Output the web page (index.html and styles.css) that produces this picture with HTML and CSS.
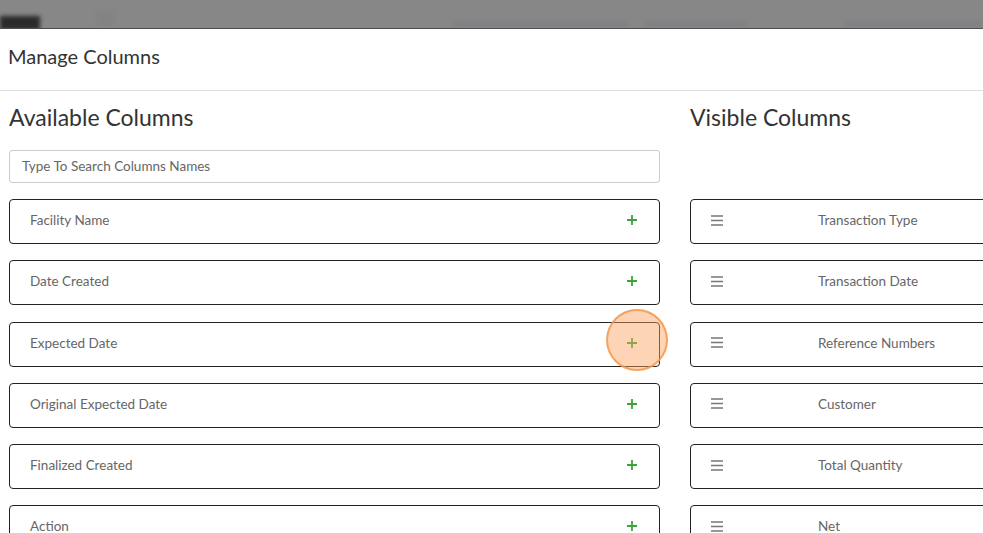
FILE: index.html
```html
<!DOCTYPE html>
<html lang="en">
<head>
    <meta charset="UTF-8">
    <meta name="viewport" content="width=device-width, initial-scale=1.0">
    <title>Manage Columns</title>
    <link rel="stylesheet" href="styles.css">
</head>
<body>

    <!-- dimmed page behind the modal -->
    <div class="backdrop">
        <span class="blur blur-logo"></span>
        <span class="blur blur-menu"></span>
        <span class="blur blur-link" style="width: 190px; margin-left: 340px;"></span>
        <span class="blur blur-link" style="width: 110px; margin-left: 18px;"></span>
        <span class="blur blur-link" style="width: 150px; margin-left: 100px;"></span>
    </div>

    <div class="modal">
        <div class="modal-header">
            <h4>Manage Columns</h4>
        </div>

        <div class="modal-body">
            <!-- Available -->
            <div class="col">
                <h2>Available Columns</h2>
                <input type="text" class="search" placeholder="Type To Search Columns Names">

                <div class="item">
                    <span>Facility Name</span>
                    <svg class="plus" width="12" height="12" viewBox="0 0 12 12"><path d="M6 1v10M1 6h10"/></svg>
                </div>
                <div class="item">
                    <span>Date Created</span>
                    <svg class="plus" width="12" height="12" viewBox="0 0 12 12"><path d="M6 1v10M1 6h10"/></svg>
                </div>
                <div class="item">
                    <span>Expected Date</span>
                    <svg class="plus" width="12" height="12" viewBox="0 0 12 12"><path d="M6 1v10M1 6h10"/></svg>
                    <span class="click-mark"></span>
                </div>
                <div class="item">
                    <span>Original Expected Date</span>
                    <svg class="plus" width="12" height="12" viewBox="0 0 12 12"><path d="M6 1v10M1 6h10"/></svg>
                </div>
                <div class="item">
                    <span>Finalized Created</span>
                    <svg class="plus" width="12" height="12" viewBox="0 0 12 12"><path d="M6 1v10M1 6h10"/></svg>
                </div>
                <div class="item">
                    <span>Action</span>
                    <svg class="plus" width="12" height="12" viewBox="0 0 12 12"><path d="M6 1v10M1 6h10"/></svg>
                </div>
            </div>

            <!-- Visible -->
            <div class="col">
                <h2>Visible Columns</h2>
                <div class="search-spacer"></div>

                <div class="item visible">
                    <svg class="handle" width="12" height="11" viewBox="0 0 12 11"><path d="M0 1h12M0 5.5h12M0 10h12"/></svg>
                    <span class="name">Transaction Type</span>
                </div>
                <div class="item visible">
                    <svg class="handle" width="12" height="11" viewBox="0 0 12 11"><path d="M0 1h12M0 5.5h12M0 10h12"/></svg>
                    <span class="name">Transaction Date</span>
                </div>
                <div class="item visible">
                    <svg class="handle" width="12" height="11" viewBox="0 0 12 11"><path d="M0 1h12M0 5.5h12M0 10h12"/></svg>
                    <span class="name">Reference Numbers</span>
                </div>
                <div class="item visible">
                    <svg class="handle" width="12" height="11" viewBox="0 0 12 11"><path d="M0 1h12M0 5.5h12M0 10h12"/></svg>
                    <span class="name">Customer</span>
                </div>
                <div class="item visible">
                    <svg class="handle" width="12" height="11" viewBox="0 0 12 11"><path d="M0 1h12M0 5.5h12M0 10h12"/></svg>
                    <span class="name">Total Quantity</span>
                </div>
                <div class="item visible">
                    <svg class="handle" width="12" height="11" viewBox="0 0 12 11"><path d="M0 1h12M0 5.5h12M0 10h12"/></svg>
                    <span class="name">Net</span>
                </div>
            </div>
        </div>
    </div>

</body>
</html>
```

FILE: styles.css
```css
/* Basic reset */
* {
    margin: 0;
    padding: 0;
    box-sizing: border-box;
}

body {
    font-family: Lato, "Liberation Sans", sans-serif;
    background-color: #fff;
    color: #333;
    overflow: hidden;
    width: 983px;
    height: 533px;
}

/* Dimmed page */
.backdrop {
    height: 29px;
    background-color: #878787;
    border-bottom: 1px solid #4f4f4f;
    display: flex;
    align-items: flex-end;
    padding-bottom: 2px;
    overflow: hidden;
}

.blur {
    display: block;
    height: 5px;
    background-color: #7d7f84;
    filter: blur(2px);
}

.blur-logo {
    width: 44px;
    height: 14px;
    background-color: #2a2a2a;
    margin-bottom: -4px;
    filter: blur(2px);
}

.blur-menu {
    width: 20px;
    height: 16px;
    background-color: #838383;
    margin-left: 56px;
}

/* Modal */
.modal {
    background-color: #fff;
}

.modal-header {
    height: 62px;
    padding: 0 8px 8px;
    display: flex;
    align-items: center;
    border-bottom: 1px solid #ddd;
}

.modal-header h4 {
    font-size: 20px;
    font-weight: 400;
    color: #333;
}

.modal-body {
    display: grid;
    grid-template-columns: 651px 651px;
    column-gap: 30px;
    padding: 0 9px;
}

.col h2 {
    font-size: 23px;
    font-weight: 400;
    color: #333;
    height: 59px;
    line-height: 53px;
}

.search {
    display: block;
    width: 100%;
    height: 33px;
    margin-bottom: 16px;
    padding: 0 12px 2px;
    border: 1px solid #ccc;
    border-radius: 3px;
    font-family: inherit;
    font-size: 13.5px;
    color: #555;
}

.search::placeholder {
    color: #666;
}

.search-spacer {
    height: 49px;
}

.item {
    position: relative;
    height: 45px;
    margin-bottom: 16.25px;
    border: 1px solid #222;
    border-radius: 4px;
    padding: 0 20px 3px;
    display: flex;
    align-items: center;
    justify-content: space-between;
    font-size: 13.5px;
    color: #666;
}

.plus {
    margin-right: 1px;
    stroke: #3ea33e;
    stroke-width: 1.8;
    fill: none;
}

.item.visible {
    justify-content: flex-start;
}

.handle {
    stroke: #777;
    stroke-width: 1.4;
    fill: none;
}

.item.visible .name {
    margin-left: 95px;
}

/* Click highlight over the add button */
.click-mark {
    position: absolute;
    right: -9px;
    top: -14px;
    width: 62px;
    height: 62px;
    border-radius: 50%;
    background-color: rgba(250, 160, 90, 0.45);
    border: 2px solid rgba(245, 150, 70, 0.8);
}
```
